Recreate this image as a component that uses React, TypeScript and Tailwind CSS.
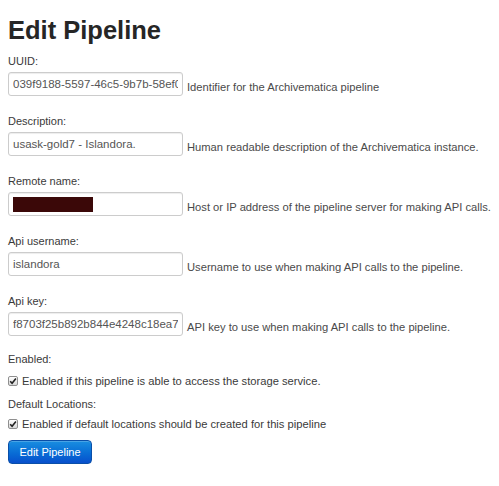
import React from "react";

type FieldProps = {
  label: string;
  help: string;
  value?: string;
  redacted?: boolean;
  last?: boolean;
};

const boxCls =
  "w-[175px] h-[24px] shrink-0 border border-[#cccccc] rounded-[3px] bg-white shadow-[inset_0_1px_1px_rgba(0,0,0,0.075)] px-[4px] text-[11.5px] text-[#555555] outline-none";

function Field({ label, help, value, redacted, last }: FieldProps) {
  return (
    <div className={last ? "mb-[14px]" : "mb-[16px]"}>
      <label className="block h-[18px] leading-[18px] mb-[2px] text-[11px] text-[#3a3a3a]">{label}</label>
      <div className="flex items-start h-[24px]">
        {redacted ? (
          <div className={boxCls + " flex items-center"}>
            <div className="w-[80px] h-[15px] bg-[#3b0808]" />
          </div>
        ) : (
          <input readOnly value={value} className={boxCls} />
        )}
        <span className="ml-[4px] mt-[7px] text-[11.2px] leading-[17px] text-[#4a4a4a] whitespace-nowrap">{help}</span>
      </div>
    </div>
  );
}

function Check({ text }: { text: string }) {
  return (
    <div className="flex items-center h-[20px] text-[11.2px] text-[#3a3a3a]">
      <span className="w-[10px] h-[10px] mr-[4px] rounded-[2px] border border-[#8f8f8f] bg-gradient-to-b from-[#ffffff] to-[#d8d8d8] flex items-center justify-center">
        <svg width="8" height="8" viewBox="0 0 8 8">
          <path d="M1.2 4.2 L3.1 6.2 L6.9 1.6" fill="none" stroke="#222" strokeWidth="1.6" />
        </svg>
      </span>
      <span>{text}</span>
    </div>
  );
}

export default function App() {
  return (
    <div className="min-h-[486px] bg-white px-[8px] font-['Liberation_Sans',Arial,sans-serif]">
      <h1 className="pt-[15px] h-[45px] mb-[7px] text-[25.5px] leading-[30px] font-bold text-[#262626]">Edit Pipeline</h1>
      <Field
        label="UUID:"
        value="039f9188-5597-46c5-9b7b-58ef0c3d1a2b"
        help="Identifier for the Archivematica pipeline"
      />
      <Field
        label="Description:"
        value="usask-gold7 - Islandora."
        help="Human readable description of the Archivematica instance."
      />
      <Field
        label="Remote name:"
        redacted
        help="Host or IP address of the pipeline server for making API calls."
      />
      <Field
        label="Api username:"
        value="islandora"
        help="Username to use when making API calls to the pipeline."
      />
      <Field
        label="Api key:"
        value="f8703f25b892b844e4248c18ea7"
        help="API key to use when making API calls to the pipeline."
        last
      />
      <div className="h-[18px] leading-[18px] text-[11px] text-[#3a3a3a]">Enabled:</div>
      <div className="mt-[3px]">
        <Check text="Enabled if this pipeline is able to access the storage service." />
      </div>
      <div className="mt-[4px] h-[18px] leading-[18px] text-[11px] text-[#3a3a3a]">Default Locations:</div>
      <div className="mt-[1px]">
        <Check text="Enabled if default locations should be created for this pipeline" />
      </div>
      <button className="mt-[6px] w-[84px] h-[24px] rounded-[4px] border border-[#0a4fa8] bg-gradient-to-b from-[#1a8ee0] to-[#0a4fcc] text-white text-[11px] shadow-[inset_0_1px_0_rgba(255,255,255,0.2)]">
        Edit Pipeline
      </button>
    </div>
  );
}
